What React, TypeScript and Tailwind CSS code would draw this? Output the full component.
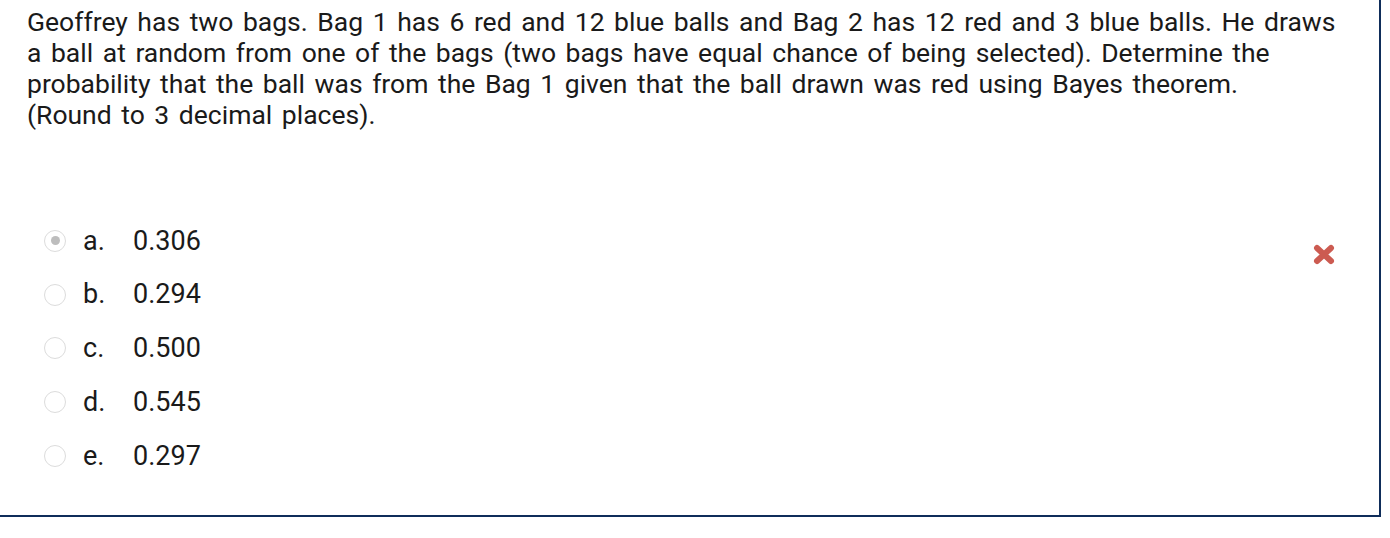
import React from "react";

const options = [
  { l: "a.", v: "0.306", checked: true },
  { l: "b.", v: "0.294" },
  { l: "c.", v: "0.500" },
  { l: "d.", v: "0.545" },
  { l: "e.", v: "0.297" },
];

export default function App() {
  return (
    <div className="w-[1390px] h-[538px] bg-white" style={{ fontFamily: "Roboto, 'Liberation Sans', sans-serif" }}>
      <div className="w-[1381px] h-[517px] border-r-2 border-b-2 border-[#0f2d5a] pl-[27px] pr-[20px] pt-[6px] relative">
        <p className="text-[26.5px] leading-[31px] [word-spacing:3px] text-[#1a1a1a]">
          Geoffrey has two bags. Bag 1 has 6 red and 12 blue balls and Bag 2 has 12 red and 3 blue balls. He draws a ball at random from one of the bags (two bags have equal chance of being selected). Determine the probability that the ball was from the Bag 1 given that the ball drawn was red using Bayes theorem.
          <br />
          (Round to 3 decimal places).
        </p>
        <div className="mt-[84px] flex flex-col">
          {options.map((o) => (
            <div key={o.l} className="flex items-center h-[53.75px] text-[27px] text-[#1a1a1a]">
              <span className="ml-[17px] w-[22px] h-[22px] rounded-full border border-[#dcdcdc] bg-white flex items-center justify-center">
                {o.checked && <span className="w-[9px] h-[9px] rounded-full bg-[#bdbdbd]" />}
              </span>
              <span className="ml-[17px] w-[50px]">{o.l}</span>
              <span>{o.v}</span>
            </div>
          ))}
        </div>
        <svg className="absolute left-[1313px] top-[244px]" width="22" height="21" viewBox="0 0 22 21">
          <path d="M4 4 L18 17 M18 4 L4 17" stroke="#cc5b51" strokeWidth="6" strokeLinecap="round" />
        </svg>
      </div>
    </div>
  );
}
